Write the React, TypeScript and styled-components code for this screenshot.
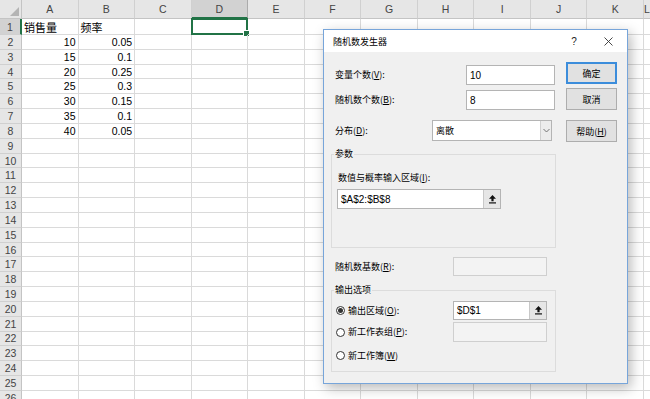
import React from 'react';
import styled, { createGlobalStyle, css } from 'styled-components';

const GlobalStyle = createGlobalStyle`
  html, body { margin: 0; padding: 0; background: #fff; }
  body {
    width: 650px; height: 399px; overflow: hidden;
    font-family: "Liberation Sans", "Noto Sans CJK SC", sans-serif;
  }
`;

const COL_W = 56.55;
const ROW_H = 14.83;
const GRID = '#dadada';
const HEAD_LINE = '#c4c4c4';
const EXCEL_GREEN = '#217346';

const Screen = styled.div`
  position: relative;
  width: 650px;
  height: 399px;
  overflow: hidden;
  background: #fff;
`;

const Sheet = styled.div`
  display: grid;
  grid-template-columns: 22px repeat(11, ${COL_W}px) 1fr;
  grid-template-rows: 19px 16px repeat(25, ${ROW_H}px);
`;

const Corner = styled.div`
  box-sizing: border-box;
  background: #e6e6e6;
  border-right: 1px solid ${HEAD_LINE};
  border-bottom: 1px solid ${HEAD_LINE};
  display: flex;
  align-items: flex-end;
  justify-content: flex-end;
  padding: 0 2px 2px 0;
`;

const ColHeader = styled.div<{ $selected?: boolean }>`
  box-sizing: border-box;
  background: ${p => (p.$selected ? '#d2d2d2' : '#e6e6e6')};
  border-right: 1px solid ${p => (p.$selected ? '#ababab' : '#d0d0d0')};
  border-bottom: ${p => (p.$selected ? `2px solid ${EXCEL_GREEN}` : `1px solid ${HEAD_LINE}`)};
  display: flex;
  align-items: center;
  justify-content: center;
  font-size: 10.5px;
  color: #444;
`;

const RowHeader = styled.div<{ $selected?: boolean }>`
  box-sizing: border-box;
  background: ${p => (p.$selected ? '#d2d2d2' : '#e6e6e6')};
  border-right: ${p => (p.$selected ? `2px solid ${EXCEL_GREEN}` : `1px solid ${HEAD_LINE}`)};
  border-bottom: 1px solid #d0d0d0;
  display: flex;
  align-items: center;
  justify-content: center;
  font-size: 10.5px;
  color: #444;
`;

const Cell = styled.div<{ $align: 'left' | 'right'; $cjk?: boolean }>`
  position: relative;
  box-sizing: border-box;
  border-right: 1px solid ${GRID};
  border-bottom: 1px solid ${GRID};
  display: flex;
  align-items: center;
  justify-content: ${p => (p.$align === 'right' ? 'flex-end' : 'flex-start')};
  padding: 0 2px;
  white-space: nowrap;
  color: #000;
  ${p =>
    p.$cjk
      ? css`
          font-family: "Noto Sans CJK SC", sans-serif;
          font-size: 11px;
        `
      : css`
          font-size: 10.5px;
        `}
`;

const Selection = styled.div`
  position: absolute;
  left: -1px;
  top: -1px;
  right: -1px;
  bottom: -1px;
  border: 2px solid ${EXCEL_GREEN};
  pointer-events: none;
`;

const FillHandle = styled.div`
  position: absolute;
  right: -4px;
  bottom: -4px;
  width: 5px;
  height: 5px;
  background: ${EXCEL_GREEN};
  border: 1px solid #fff;
`;

/* ---------------- Dialog ---------------- */

const Dialog = styled.div`
  position: absolute;
  left: 323px;
  top: 29px;
  z-index: 10;
  width: 305px;
  height: 355px;
  box-sizing: border-box;
  border: 1px solid #77a5da;
  background: #f0f0f0;
  box-shadow: 3px 4px 12px rgba(0, 0, 0, 0.28);
  display: flex;
  flex-direction: column;
  font-family: "Noto Sans CJK SC", "Liberation Sans", sans-serif;
  font-size: 9px;
  color: #000;
`;

const TitleBar = styled.div`
  height: 22px;
  flex: none;
  background: #fff;
  display: flex;
  align-items: center;
  padding-left: 9px;
`;

const TitleText = styled.span`
  flex: 1;
  font-size: 9px;
`;

const HelpGlyph = styled.span`
  width: 30px;
  text-align: center;
  font-family: "Liberation Sans", sans-serif;
  font-size: 10px;
  color: #222;
`;

const CloseBtn = styled.span`
  width: 38px;
  display: flex;
  justify-content: center;
  align-items: center;
`;

const Body = styled.div`
  flex: 1;
  display: flex;
  padding-left: 7px;
`;

const MainCol = styled.div`
  width: 225px;
  display: flex;
  flex-direction: column;
`;

const ButtonCol = styled.div`
  width: 51px;
  margin-left: 10px;
  display: flex;
  flex-direction: column;
`;

const DlgButton = styled.div<{ $mt: number; $primary?: boolean }>`
  box-sizing: border-box;
  margin-top: ${p => p.$mt}px;
  height: 22px;
  background: #e1e1e1;
  border: ${p => (p.$primary ? '2px solid #3c8ddb' : '1px solid #adadad')};
  display: flex;
  align-items: center;
  justify-content: center;
  font-size: 9px;
`;

const FieldRow = styled.div<{ $mt: number; $h: number }>`
  display: flex;
  align-items: center;
  margin-top: ${p => p.$mt}px;
  height: ${p => p.$h}px;
`;

const Label = styled.span<{ $indent?: number }>`
  flex: 1;
  padding-left: ${p => p.$indent ?? 4}px;
  white-space: nowrap;
  line-height: 12px;
`;

const TextBox = styled.div<{ $w: number; $mr?: number; $disabled?: boolean }>`
  box-sizing: border-box;
  width: ${p => p.$w}px;
  margin-right: ${p => p.$mr ?? 0}px;
  height: 100%;
  display: flex;
  align-items: stretch;
  background: ${p => (p.$disabled ? '#f3f3f3' : '#fff')};
  border: 1px solid ${p => (p.$disabled ? '#cfcfcf' : '#b4b4b4')};
  font-family: "Liberation Sans", sans-serif;
  font-size: 10px;
`;

const TextValue = styled.span`
  flex: 1;
  display: flex;
  align-items: center;
  padding-left: 3px;
  white-space: nowrap;
`;

const CjkValue = styled(TextValue)`
  font-family: "Noto Sans CJK SC", sans-serif;
  font-size: 9px;
`;

const RangeBtn = styled.span`
  width: 16px;
  background: #e6e6e6;
  border-left: 1px solid #c8c8c8;
  display: flex;
  align-items: center;
  justify-content: center;
`;

const DropArrow = styled.span`
  width: 10px;
  background: #ececec;
  border-left: 1px solid #d0d0d0;
  display: flex;
  align-items: center;
  justify-content: center;
`;

const Group = styled.fieldset<{ $mt: number; $pb: number }>`
  margin: ${p => p.$mt}px 0 0 0;
  padding: 0 0 ${p => p.$pb}px 0;
  min-width: 0;
  border: 1px solid #dcdcdc;
  display: flex;
  flex-direction: column;
`;

const Legend = styled.legend`
  padding: 0 1px;
  margin-left: 2px;
  line-height: 12px;
  font-size: 9px;
`;

const GroupLabel = styled.div`
  margin-top: 12px;
  padding-left: 6px;
  line-height: 12px;
`;

const GroupInputRow = styled.div`
  margin-top: 5px;
  height: 20px;
  padding-left: 5px;
  display: flex;
`;

const Radio = styled.span<{ $checked?: boolean }>`
  box-sizing: border-box;
  flex: none;
  width: 9px;
  height: 9px;
  margin-left: 4px;
  margin-right: 3px;
  border-radius: 50%;
  border: 1px solid #333;
  background: #fff;
  display: flex;
  align-items: center;
  justify-content: center;
  &::after {
    content: '';
    display: ${p => (p.$checked ? 'block' : 'none')};
    width: 5px;
    height: 5px;
    border-radius: 50%;
    background: #333;
  }
`;

const UpIcon = () => (
  <svg width="7" height="9" viewBox="0 0 7 9">
    <path d="M3.5 0 L7 3.8 H4.6 V6.2 H2.4 V3.8 H0 Z" fill="#111" />
    <rect x="0" y="7.3" width="7" height="1.2" fill="#111" />
  </svg>
);

const Chevron = () => (
  <svg width="7" height="5" viewBox="0 0 7 5">
    <path d="M0.5 1 L3.5 4 L6.5 1" fill="none" stroke="#666" strokeWidth="0.9" />
  </svg>
);

const CloseIcon = () => (
  <svg width="9" height="9" viewBox="0 0 9 9">
    <path d="M0.5 0.5 L8.5 8.5 M8.5 0.5 L0.5 8.5" stroke="#333" strokeWidth="0.9" />
  </svg>
);

const CornerTriangle = () => (
  <svg width="9" height="9" viewBox="0 0 9 9">
    <path d="M9 0 L9 9 L0 9 Z" fill="#b4b4b4" />
  </svg>
);

const cols = ['A', 'B', 'C', 'D', 'E', 'F', 'G', 'H', 'I', 'J', 'K', 'L'];
const rows = Array.from({ length: 26 }, (_, i) => i + 1);

const data: Record<string, string> = {
  A1: '销售量',
  B1: '频率',
  A2: '10', B2: '0.05',
  A3: '15', B3: '0.1',
  A4: '20', B4: '0.25',
  A5: '25', B5: '0.3',
  A6: '30', B6: '0.15',
  A7: '35', B7: '0.1',
  A8: '40', B8: '0.05',
};

export default function App() {
  return (
    <Screen>
      <GlobalStyle />
      <Sheet>
        <Corner>
          <CornerTriangle />
        </Corner>
        {cols.map(c => (
          <ColHeader key={c} $selected={c === 'D'}>
            {c}
          </ColHeader>
        ))}
        {rows.map(r => (
          <React.Fragment key={r}>
            <RowHeader $selected={r === 1}>{r}</RowHeader>
            {cols.map(c => {
              const v = data[c + r];
              const isNum = v !== undefined && /^[\d.]+$/.test(v);
              return (
                <Cell key={c + r} $align={isNum ? 'right' : 'left'} $cjk={!!v && !isNum}>
                  {v}
                  {c === 'D' && r === 1 && (
                    <Selection>
                      <FillHandle />
                    </Selection>
                  )}
                </Cell>
              );
            })}
          </React.Fragment>
        ))}
      </Sheet>

      <Dialog>
        <TitleBar>
          <TitleText>随机数发生器</TitleText>
          <HelpGlyph>?</HelpGlyph>
          <CloseBtn>
            <CloseIcon />
          </CloseBtn>
        </TitleBar>
        <Body>
          <MainCol>
            <FieldRow $mt={13} $h={20}>
              <Label>变量个数(<u>V</u>):</Label>
              <TextBox $w={89} $mr={1}>
                <TextValue>10</TextValue>
              </TextBox>
            </FieldRow>
            <FieldRow $mt={5} $h={20}>
              <Label>随机数个数(<u>B</u>):</Label>
              <TextBox $w={89} $mr={1}>
                <TextValue>8</TextValue>
              </TextBox>
            </FieldRow>
            <FieldRow $mt={10} $h={21}>
              <Label>分布(<u>D</u>):</Label>
              <TextBox $w={120} $mr={4}>
                <CjkValue>离散</CjkValue>
                <DropArrow>
                  <Chevron />
                </DropArrow>
              </TextBox>
            </FieldRow>

            <Group $mt={7} $pb={38}>
              <Legend>参数</Legend>
              <GroupLabel>数值与概率输入区域(<u>I</u>):</GroupLabel>
              <GroupInputRow>
                <TextBox $w={164}>
                  <TextValue>$A$2:$B$8</TextValue>
                  <RangeBtn>
                    <UpIcon />
                  </RangeBtn>
                </TextBox>
              </GroupInputRow>
            </Group>

            <FieldRow $mt={9} $h={19}>
              <Label>随机数基数(<u>R</u>):</Label>
              <TextBox $w={94} $mr={9} $disabled />
            </FieldRow>

            <Group $mt={8} $pb={6}>
              <Legend>输出选项</Legend>
              <FieldRow $mt={5} $h={19}>
                <Radio $checked />
                <Label $indent={0}>输出区域(<u>O</u>):</Label>
                <TextBox $w={94} $mr={8}>
                  <TextValue>$D$1</TextValue>
                  <RangeBtn>
                    <UpIcon />
                  </RangeBtn>
                </TextBox>
              </FieldRow>
              <FieldRow $mt={2} $h={20}>
                <Radio />
                <Label $indent={0}>新工作表组(<u>P</u>):</Label>
                <TextBox $w={94} $mr={8} $disabled />
              </FieldRow>
              <FieldRow $mt={4} $h={19}>
                <Radio />
                <Label $indent={0}>新工作簿(<u>W</u>)</Label>
              </FieldRow>
            </Group>
          </MainCol>

          <ButtonCol>
            <DlgButton $mt={10} $primary>确定</DlgButton>
            <DlgButton $mt={4}>取消</DlgButton>
            <DlgButton $mt={10}>帮助(<u>H</u>)</DlgButton>
          </ButtonCol>
        </Body>
      </Dialog>
    </Screen>
  );
}
